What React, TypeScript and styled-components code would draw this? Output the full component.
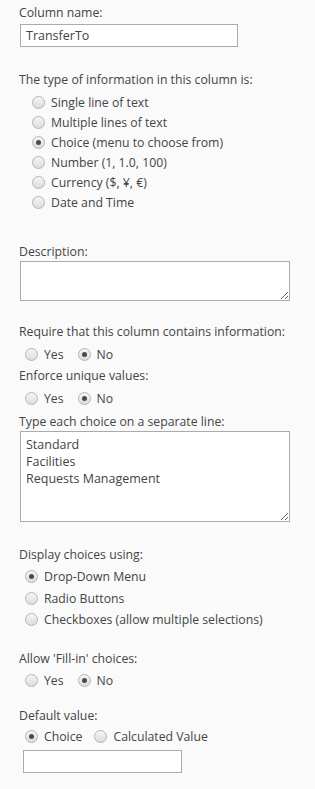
import React from 'react';
import styled, { createGlobalStyle } from 'styled-components';

const GlobalStyle = createGlobalStyle`
  html, body {
    margin: 0;
    padding: 0;
    background: #fafafa;
  }
  body {
    font-family: "Open Sans", "Noto Sans", sans-serif;
    font-size: 12.25px;
    color: #444444;
  }
`;

const Page = styled.div`
  width: 315px;
  min-height: 789px;
  box-sizing: border-box;
  padding: 4px 0 0 19px;
  background: #fafafa;
`;

const Section = styled.div<{ $gap?: number }>`
  margin-top: ${p => p.$gap ?? 0}px;
`;

const Label = styled.div<{ $top?: number }>`
  line-height: 17px;
  height: 17px;
  margin-top: ${p => p.$top ?? 0}px;
  white-space: nowrap;
`;

const TextInput = styled.input<{ $w: number; $ml?: number }>`
  display: block;
  box-sizing: border-box;
  width: ${p => p.$w}px;
  height: 23px;
  margin: 3px 0 0 ${p => p.$ml ?? 1}px;
  padding: 0 5px;
  border: 1px solid #ababab;
  background: #ffffff;
  font-family: inherit;
  font-size: 12.5px;
  color: #444444;
  outline: none;
`;

const TextArea = styled.textarea<{ $h: number }>`
  display: block;
  box-sizing: border-box;
  width: 270px;
  height: ${p => p.$h}px;
  margin: 1px 0 0 1px;
  padding: 4px 5px;
  border: 1px solid #ababab;
  background: #ffffff;
  font-family: inherit;
  font-size: 12.5px;
  line-height: 17px;
  color: #444444;
  outline: none;
`;

const OptionList = styled.div<{ $indent: number; $row: number; $top: number }>`
  display: flex;
  flex-direction: column;
  margin: ${p => p.$top}px 0 0 ${p => p.$indent}px;
  & > label {
    height: ${p => p.$row}px;
  }
`;

const OptionInline = styled.div<{ $indent: number; $top: number; $spacing: number }>`
  display: flex;
  align-items: center;
  height: 20px;
  margin: ${p => p.$top}px 0 0 ${p => p.$indent}px;
  gap: ${p => p.$spacing}px;
`;

const Option = styled.label`
  display: flex;
  align-items: center;
  gap: 6px;
  white-space: nowrap;
  line-height: 17px;
`;

const RadioDot = styled.span<{ $checked?: boolean }>`
  position: relative;
  flex: none;
  width: 13px;
  height: 13px;
  box-sizing: border-box;
  border-radius: 50%;
  border: 1px solid #b4b4b4;
  background: linear-gradient(#f6f6f6, #dcdcdc);
  &::after {
    content: '';
    display: ${p => (p.$checked ? 'block' : 'none')};
    position: absolute;
    left: 3px;
    top: 3px;
    width: 5px;
    height: 5px;
    border-radius: 50%;
    background: #4a4a4a;
  }
`;

const Radio: React.FC<{ checked?: boolean; text: string }> = ({ checked, text }) => (
  <Option>
    <RadioDot $checked={checked} />
    <span>{text}</span>
  </Option>
);

const YesNo: React.FC<{ top: number }> = ({ top }) => (
  <OptionInline $indent={6} $top={top} $spacing={14}>
    <Radio text="Yes" />
    <Radio text="No" checked />
  </OptionInline>
);

const App: React.FC = () => {
  const types = [
    'Single line of text',
    'Multiple lines of text',
    'Choice (menu to choose from)',
    'Number (1, 1.0, 100)',
    'Currency ($, ¥, €)',
    'Date and Time',
  ];
  const display = ['Drop-Down Menu', 'Radio Buttons', 'Checkboxes (allow multiple selections)'];

  return (
    <Page>
      <GlobalStyle />
      <Section>
        <Label>Column name:</Label>
        <TextInput $w={218} defaultValue="TransferTo" />
      </Section>

      <Section $gap={24}>
        <Label>The type of information in this column is:</Label>
        <OptionList $indent={13} $row={20} $top={4}>
          {types.map((t, i) => (
            <Radio key={t} text={t} checked={i === 2} />
          ))}
        </OptionList>
      </Section>

      <Section $gap={31}>
        <Label>Description:</Label>
        <TextArea $h={40} defaultValue="" />
      </Section>

      <Section $gap={22}>
        <Label>Require that this column contains information:</Label>
        <YesNo top={4} />
        <Label $top={3}>Enforce unique values:</Label>
        <YesNo top={4} />
      </Section>

      <Section $gap={5}>
        <Label>Type each choice on a separate line:</Label>
        <TextArea $h={91} defaultValue={'Standard\nFacilities\nRequests Management'} />
      </Section>

      <Section $gap={24}>
        <Label>Display choices using:</Label>
        <OptionList $indent={6} $row={21.5} $top={3}>
          {display.map((t, i) => (
            <Radio key={t} text={t} checked={i === 0} />
          ))}
        </OptionList>
      </Section>

      <Section $gap={19}>
        <Label>Allow 'Fill-in' choices:</Label>
        <YesNo top={4} />
      </Section>

      <Section $gap={16}>
        <Label>Default value:</Label>
        <OptionInline $indent={6} $top={3} $spacing={12}>
          <Radio text="Choice" checked />
          <Radio text="Calculated Value" />
        </OptionInline>
        <TextInput $w={159} $ml={4} defaultValue="" />
      </Section>
    </Page>
  );
};

export default App;
